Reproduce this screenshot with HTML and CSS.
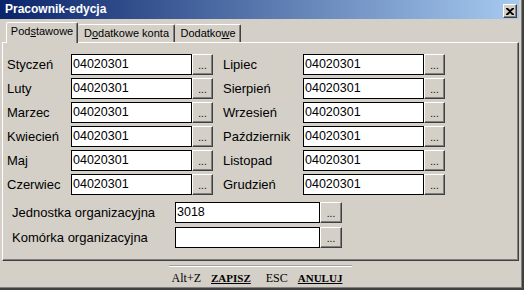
FILE: index.html
```html
<!DOCTYPE html>
<html lang="pl">
<head>
  <meta charset="UTF-8" />
  <title>Pracownik-edycja</title>
  <link rel="stylesheet" href="styles.css">
</head>
<body>
  <div class="window">
    <div class="titlebar">
      <span class="title">Pracownik-edycja</span>
      <span class="close">
        <svg width="8" height="7" viewBox="0 0 8 7"><path d="M0 0h2l2 2 2-2h2v1L5 3.5 8 6v1H6L4 5 2 7H0V6l3-2.5L0 1z" fill="#000"/></svg>
      </span>
    </div>

    <div class="client">
      <div class="tabs">
        <div class="tab active">Pod<u>s</u>tawowe</div>
        <div class="tab t2">D<u>o</u>datkowe konta</div>
        <div class="tab t3">Dodatko<u>w</u>e</div>
      </div>

      <div class="panel">
        <div class="months">
          <label>Styczeń</label><div class="edit">04020301</div><div class="dots">...</div>
          <label class="right">Lipiec</label><div class="edit">04020301</div><div class="dots">...</div>

          <label>Luty</label><div class="edit">04020301</div><div class="dots">...</div>
          <label class="right">Sierpień</label><div class="edit">04020301</div><div class="dots">...</div>

          <label>Marzec</label><div class="edit">04020301</div><div class="dots">...</div>
          <label class="right">Wrzesień</label><div class="edit">04020301</div><div class="dots">...</div>

          <label>Kwiecień</label><div class="edit">04020301</div><div class="dots">...</div>
          <label class="right">Październik</label><div class="edit">04020301</div><div class="dots">...</div>

          <label>Maj</label><div class="edit">04020301</div><div class="dots">...</div>
          <label class="right">Listopad</label><div class="edit">04020301</div><div class="dots">...</div>

          <label>Czerwiec</label><div class="edit">04020301</div><div class="dots">...</div>
          <label class="right">Grudzień</label><div class="edit">04020301</div><div class="dots">...</div>
        </div>

        <div class="units">
          <label>Jednostka organizacyjna</label><div class="edit">3018</div><div class="dots">...</div>
          <label>Komórka organizacyjna</label><div class="edit"></div><div class="dots">...</div>
        </div>
      </div>

      <div class="footer">
        <div class="keys">
          <span class="key">Alt+Z</span>
          <span class="action">ZAPISZ</span>
          <span class="key esc">ESC</span>
          <span class="action">ANULUJ</span>
        </div>
      </div>
    </div>
  </div>
</body>
</html>
```

FILE: styles.css
```css
body {
  margin: 0;
  padding: 0;
  background-color: #d4d0c8;
  font-family: 'Liberation Sans', Arial, sans-serif;
  color: #000;
}
.window {
  width: 524px;
  height: 290px;
  box-sizing: border-box;
  padding-right: 3px;
  border-right: 2px solid #404040;
  border-bottom: 2px solid #404040;
  box-shadow: inset -1px -1px #808080;
  display: flex;
  flex-direction: column;
}
.titlebar {
  height: 19px;
  background: linear-gradient(to right, #0a246a, #a6caf0);
  display: flex;
  align-items: center;
  justify-content: space-between;
  padding-left: 5px;
}
.title {
  color: #fff;
  font-weight: bold;
  font-size: 12px;
  line-height: 19px;
}
.close {
  width: 12px;
  height: 12px;
  margin-right: 2px;
  margin-top: 3px;
  background-color: #d4d0c8;
  border-top: 1px solid #fff;
  border-left: 1px solid #fff;
  border-right: 1px solid #404040;
  border-bottom: 1px solid #404040;
  box-shadow: inset -1px -1px #808080;
  display: flex;
  align-items: center;
  justify-content: center;
}
.client {
  flex: 1;
  padding-left: 2px;
  display: flex;
  flex-direction: column;
}
.tabs {
  display: flex;
  align-items: flex-end;
  height: 20px;
  margin-top: 3px;
  padding-left: 4px;
  font-size: 11px;
}
.tab {
  height: 17px;
  line-height: 17px;
  text-align: center;
  border-top: 1px solid #fff;
  border-left: 1px solid #fff;
  border-right: 1px solid #404040;
  box-shadow: inset -1px 0 #808080;
  border-radius: 2px 2px 0 0;
  box-sizing: border-box;
  height: 18px;
}
.tab.active {
  width: 72px;
  height: 21px;
  line-height: 17px;
  margin-bottom: -1px;
  background-color: #d4d0c8;
  position: relative;
  z-index: 1;
}
.tab.t2 {
  width: 97px;
  border-left: none;
  padding-left: 1px;
}
.tab.t3 {
  width: 66px;
  border-left: none;
  padding-left: 1px;
}
.panel {
  height: 219px;
  box-sizing: border-box;
  border-top: 1px solid #fff;
  border-left: 1px solid #fff;
  border-right: 1px solid #404040;
  border-bottom: 1px solid #404040;
  box-shadow: inset -1px -1px #808080;
  padding: 11px 0 0 4px;
}
.months {
  display: grid;
  grid-template-columns: 64px 121px 21px 90px 121px 21px;
  grid-auto-rows: 21px;
  row-gap: 3px;
}
.units {
  display: grid;
  grid-template-columns: 163px 145px 22px;
  grid-auto-rows: 21px;
  row-gap: 4px;
  margin-top: 7px;
  padding-left: 5px;
}
label {
  font-size: 13px;
  line-height: 22px;
  white-space: nowrap;
}
label.right {
  padding-left: 10px;
}
.edit {
  background-color: #fff;
  border: 1px solid #000;
  font-size: 12.5px;
  line-height: 19px;
  padding-left: 1px;
}
.dots {
  box-sizing: border-box;
  border-top: 1px solid #fff;
  border-left: 1px solid #fff;
  border-right: 1px solid #404040;
  border-bottom: 1px solid #404040;
  box-shadow: inset -1px -1px #808080;
  font-size: 10px;
  text-align: center;
  line-height: 21px;
}
.footer {
  display: flex;
  justify-content: center;
  padding-top: 4px;
}
.keys {
  border-top: 1px solid #a0a0a0;
  box-shadow: inset 0 1px #fff;
  padding: 5px 10px 0 3px;
  font-family: 'Liberation Serif', 'Times New Roman', serif;
  display: flex;
  align-items: baseline;
  gap: 10px;
}
.key {
  font-size: 12px;
}
.key.esc {
  margin-left: 5px;
}
.action {
  font-size: 11px;
  font-weight: bold;
  text-decoration: underline;
}
```
